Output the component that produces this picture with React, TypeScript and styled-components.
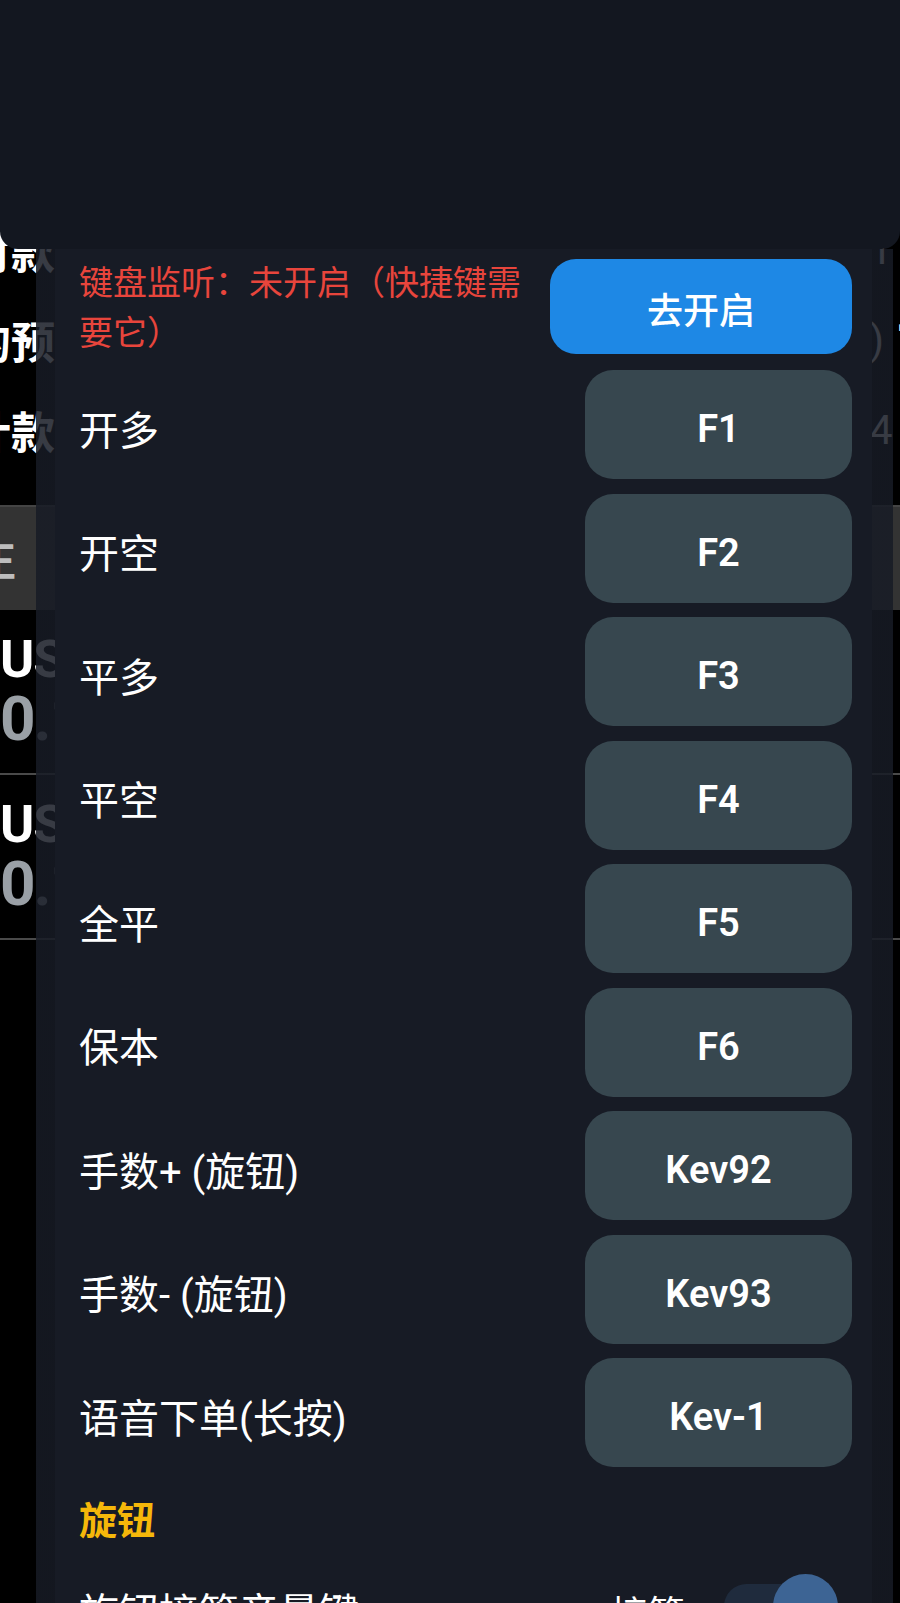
import React from "react";
import styled, { createGlobalStyle } from "styled-components";

const GlobalStyle = createGlobalStyle`
  html, body {
    margin: 0;
    padding: 0;
    background: #000;
  }
  body {
    font-family: Roboto, "Noto Sans CJK SC", sans-serif;
  }
  * {
    box-sizing: border-box;
  }
`;

const Screen = styled.div`
  position: relative;
  width: 900px;
  height: 1603px;
  overflow: hidden;
  background: #000;
`;

/* page behind the sheet */
const BackPage = styled.div`
  display: flex;
  flex-direction: column;
  padding-top: 205px;
`;

const InfoRow = styled.div`
  height: 90px;
  display: flex;
  align-items: center;
  justify-content: space-between;
  color: #fff;
  font-family: "Noto Sans CJK SC", sans-serif;
  font-size: 44px;
  font-weight: 700;
`;

const EdgeLeft = styled.div<{ $w?: number }>`
  width: ${(p) => p.$w ?? 55}px;
  overflow: hidden;
  display: flex;
  justify-content: flex-end;
  white-space: nowrap;
`;

const EdgeRight = styled.div`
  width: 30px;
  overflow: hidden;
  white-space: nowrap;
  font-family: Roboto, sans-serif;
  font-weight: 400;
  font-size: 40px;
`;

const TabBand = styled.div`
  margin-top: 30px;
  height: 105px;
  background: #333333;
  border-top: 2px solid #444;
  display: flex;
  align-items: center;
  justify-content: space-between;
  color: #bdbdbd;
  font-family: "Noto Sans CJK SC", sans-serif;
  font-size: 40px;
  font-weight: 700;
`;

const OrderItem = styled.div`
  height: 165px;
  padding-top: 22px;
  border-bottom: 2px solid #4a4a4a;
  display: flex;
  flex-direction: column;
`;

const Symbol = styled.div`
  font-family: Roboto, sans-serif;
  font-size: 52px;
  line-height: 56px;
  font-weight: 700;
  color: #fff;
  white-space: nowrap;
  letter-spacing: -1px;
`;

const Amount = styled.div`
  font-family: Roboto, sans-serif;
  font-size: 62px;
  line-height: 62px;
  font-weight: 700;
  color: #9aa0a6;
  white-space: nowrap;
  letter-spacing: -2px;
`;

/* top panel */
const TopPanel = styled.div`
  position: absolute;
  top: 0;
  left: 0;
  right: 0;
  height: 249px;
  background: #131720;
  border-radius: 0 0 18px 18px;
  z-index: 2;
`;

/* the settings sheet */
const Sheet = styled.div`
  position: absolute;
  top: 249px;
  left: 36px;
  right: 7px;
  bottom: 0;
  z-index: 1;
  padding: 7px 41px 0 43px;
  background: linear-gradient(
    to right,
    rgba(23, 27, 37, 0.86) 0,
    rgba(23, 27, 37, 0.86) 19px,
    #171b25 19px,
    #171b25 calc(100% - 21px),
    rgba(23, 27, 37, 0.86) calc(100% - 21px)
  );
  display: flex;
  flex-direction: column;
`;

const StatusRow = styled.div`
  display: flex;
  align-items: center;
  justify-content: space-between;
`;

const StatusText = styled.div`
  flex: 1;
  padding-right: 24px;
  color: #e8453c;
  font-family: "Noto Sans CJK SC", sans-serif;
  font-size: 34px;
  line-height: 50px;
`;

const EnableButton = styled.button`
  width: 302px;
  height: 95px;
  flex-shrink: 0;
  padding-top: 4px;
  border: none;
  border-radius: 26px;
  background: #1e88e5;
  color: #fff;
  font-family: "Noto Sans CJK SC", sans-serif;
  font-size: 36px;
  font-weight: 500;
`;

const KeyList = styled.div`
  margin-top: 14px;
  display: flex;
  flex-direction: column;
  gap: 14.5px;
`;

const KeyRow = styled.div`
  height: 109px;
  display: flex;
  align-items: center;
  justify-content: space-between;
`;

const Label = styled.div`
  color: #fff;
  font-family: Roboto, "Noto Sans CJK SC", sans-serif;
  font-size: 40px;
  white-space: nowrap;
  padding-top: 6px;
`;

const KeyButton = styled.button`
  width: 267px;
  height: 109px;
  padding-top: 10px;
  border: none;
  border-radius: 28px;
  background: #37474f;
  color: #fff;
  font-family: Roboto, sans-serif;
  font-size: 38px;
  font-weight: 600;
`;

const SectionTitle = styled.div`
  margin-top: 29px;
  color: #f5b70a;
  font-family: "Noto Sans CJK SC", sans-serif;
  font-size: 38px;
  line-height: 44px;
  font-weight: 700;
`;

const ToggleRow = styled.div`
  margin-top: 34px;
  height: 80px;
  display: flex;
  align-items: center;
  justify-content: space-between;
`;

const ToggleSide = styled.div`
  display: flex;
  align-items: center;
  gap: 39px;
`;

const ToggleText = styled.div`
  color: #fff;
  font-family: "Noto Sans CJK SC", sans-serif;
  font-size: 37px;
  padding-top: 10px;
`;

const Switch = styled.div`
  position: relative;
  width: 114px;
  height: 65px;
  margin-right: 14px;
`;

const Track = styled.div`
  position: absolute;
  left: 0;
  top: 10px;
  width: 110px;
  height: 45px;
  border-radius: 23px;
  background: #1f2b3d;
`;

const Knob = styled.div`
  position: absolute;
  right: 0;
  top: 0;
  width: 65px;
  height: 65px;
  border-radius: 50%;
  background: #3d6494;
`;

const shortcuts = [
  { label: "开多", key: "F1" },
  { label: "开空", key: "F2" },
  { label: "平多", key: "F3" },
  { label: "平空", key: "F4" },
  { label: "全平", key: "F5" },
  { label: "保本", key: "F6" },
  { label: "手数+ (旋钮)", key: "Kev92" },
  { label: "手数- (旋钮)", key: "Kev93" },
  { label: "语音下单(长按)", key: "Kev-1" },
];

const orders = [
  { symbol: "USDT", amount: "0.1" },
  { symbol: "USDT", amount: "0.1" },
];

export default function App() {
  return (
    <>
      <GlobalStyle />
      <Screen>
        <BackPage>
          <InfoRow>
            <EdgeLeft>付款</EdgeLeft>
            <EdgeRight>T</EdgeRight>
          </InfoRow>
          <InfoRow>
            <EdgeLeft>的预</EdgeLeft>
            <EdgeRight>) ˈ</EdgeRight>
          </InfoRow>
          <InfoRow>
            <EdgeLeft>计款</EdgeLeft>
            <EdgeRight>4 ˈ</EdgeRight>
          </InfoRow>
          <TabBand>
            <EdgeLeft $w={16}>正</EdgeLeft>
          </TabBand>
          {orders.map((o, i) => (
            <OrderItem key={i}>
              <Symbol>{o.symbol}</Symbol>
              <Amount>{o.amount}</Amount>
            </OrderItem>
          ))}
        </BackPage>

        <TopPanel />

        <Sheet>
          <StatusRow>
            <StatusText>键盘监听：未开启（快捷键需要它）</StatusText>
            <EnableButton>去开启</EnableButton>
          </StatusRow>

          <KeyList>
            {shortcuts.map((s) => (
              <KeyRow key={s.key}>
                <Label>{s.label}</Label>
                <KeyButton>{s.key}</KeyButton>
              </KeyRow>
            ))}
          </KeyList>

          <SectionTitle>旋钮</SectionTitle>

          <ToggleRow>
            <Label>旋钮接管音量键</Label>
            <ToggleSide>
              <ToggleText>接管</ToggleText>
              <Switch>
                <Track />
                <Knob />
              </Switch>
            </ToggleSide>
          </ToggleRow>
        </Sheet>
      </Screen>
    </>
  );
}
